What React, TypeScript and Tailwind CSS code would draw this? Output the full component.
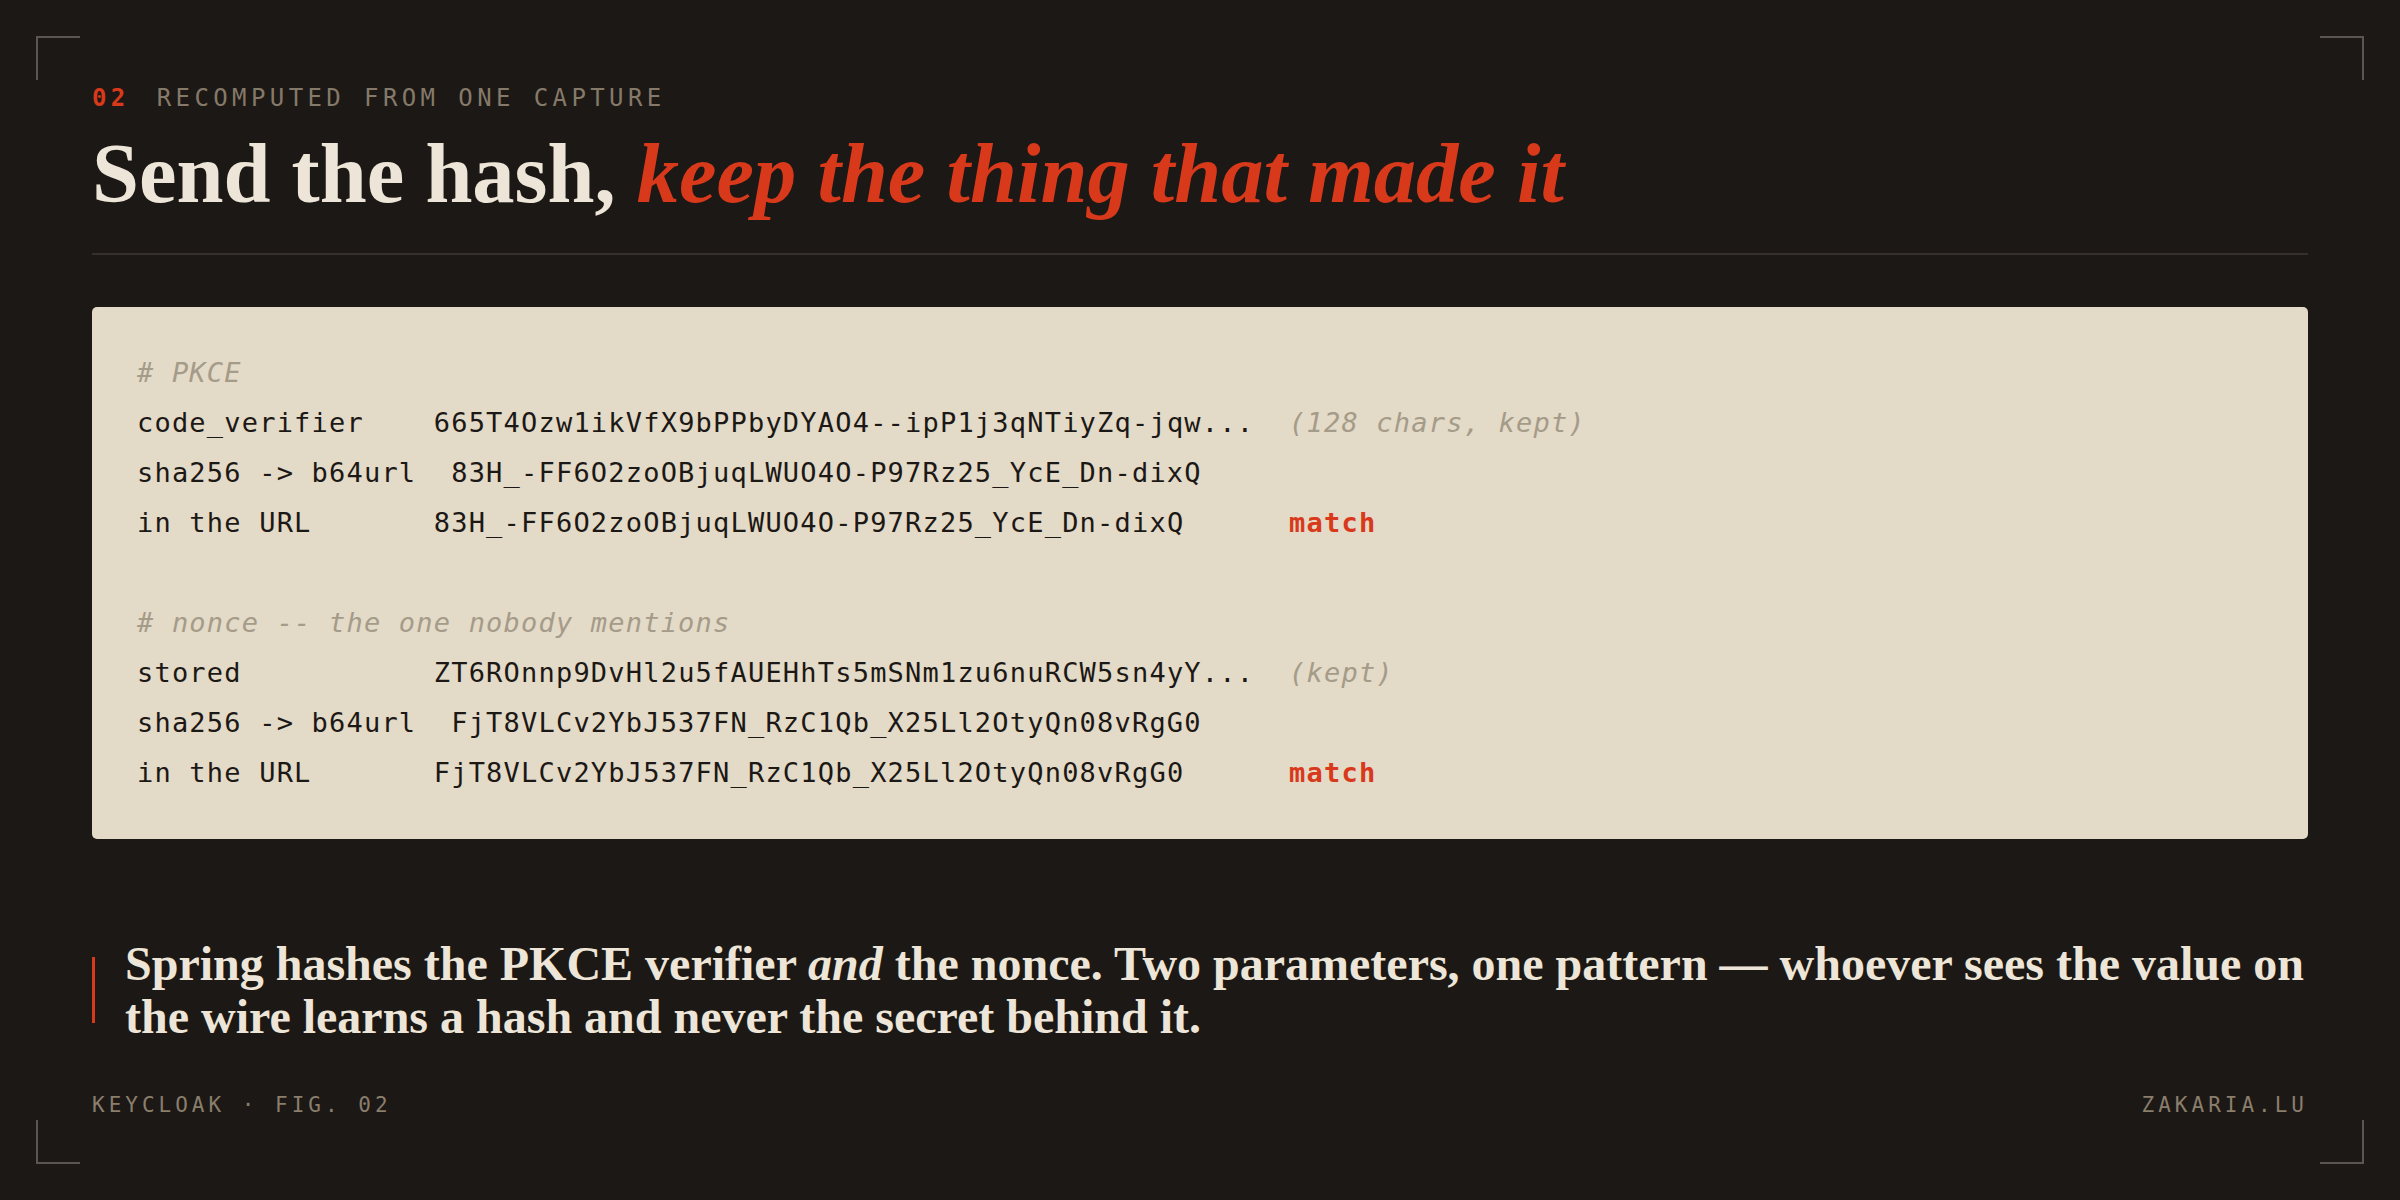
import React from "react";

const mono = "font-['DejaVu_Sans_Mono','Liberation_Mono',monospace]";
const serif = "font-['Liberation_Serif','DejaVu_Serif',serif]";

type Line = { label?: string; value?: string; note?: string; match?: boolean; comment?: string };

const lines: Line[] = [
  { comment: "# PKCE" },
  { label: "code_verifier    ", value: "665T4Ozw1ikVfX9bPPbyDYAO4--ipP1j3qNTiyZq-jqw...  ", note: "(128 chars, kept)" },
  { label: "sha256 -> b64url  ", value: "83H_-FF6O2zoOBjuqLWUO4O-P97Rz25_YcE_Dn-dixQ" },
  { label: "in the URL       ", value: "83H_-FF6O2zoOBjuqLWUO4O-P97Rz25_YcE_Dn-dixQ      ", match: true },
  {},
  { comment: "# nonce -- the one nobody mentions" },
  { label: "stored           ", value: "ZT6ROnnp9DvHl2u5fAUEHhTs5mSNm1zu6nuRCW5sn4yY...  ", note: "(kept)" },
  { label: "sha256 -> b64url  ", value: "FjT8VLCv2YbJ537FN_RzC1Qb_X25Ll2OtyQn08vRgG0" },
  { label: "in the URL       ", value: "FjT8VLCv2YbJ537FN_RzC1Qb_X25Ll2OtyQn08vRgG0      ", match: true },
];

function Corner({ pos }: { pos: "tl" | "tr" | "bl" | "br" }) {
  const cls =
    pos === "tl"
      ? "top-[36px] left-[36px] border-t-2 border-l-2"
      : pos === "tr"
      ? "top-[36px] right-[36px] border-t-2 border-r-2"
      : pos === "bl"
      ? "bottom-[36px] left-[36px] border-b-2 border-l-2"
      : "bottom-[36px] right-[36px] border-b-2 border-r-2";
  return <div className={`absolute w-[44px] h-[44px] border-[#5a554e] ${cls}`} />;
}

export default function App() {
  return (
    <div className="relative w-full h-screen overflow-hidden bg-[#1c1815] px-[92px] pt-[86px]">
      <Corner pos="tl" />
      <Corner pos="tr" />
      <Corner pos="bl" />
      <Corner pos="br" />

      {/* Eyebrow */}
      <div className={`${mono} flex items-center gap-[27px] text-[24px] leading-none tracking-[4.4px] uppercase`}>
        <span className="text-[#d9391b] font-bold">02</span>
        <span className="text-[#857a69]">Recomputed from one capture</span>
      </div>

      {/* Title */}
      <h1 className={`${serif} mt-[22px] text-[84.5px] leading-none font-bold text-[#ede5d7]`}>
        Send the hash, <em className="text-[#d9391b]">keep the thing that made it</em>
      </h1>

      <div className="mt-[36px] border-t-2 border-[#35302b]" />

      {/* Code block */}
      <div className={`${mono} mt-[52px] rounded-[5px] bg-[#e3dac7] pl-[45px] pr-[40px] pt-[41px] pb-[41px] text-[27px] leading-[50px] tracking-[1.2px] text-[#1c1815]`}>
        {lines.map((l, i) => (
          <div key={i} className="whitespace-pre h-[50px]">
            {l.comment && <span className="italic text-[#a59b89]">{l.comment}</span>}
            {l.label}
            {l.value}
            {l.note && <span className="italic text-[#a59b89]">{l.note}</span>}
            {l.match && <span className="font-bold text-[#d9391b]">match</span>}
          </div>
        ))}
      </div>

      {/* Pull quote */}
      <div className="mt-[98px] flex">
        <div className="w-[3px] my-[20px] bg-[#d9391b] shrink-0" />
        <p className={`${serif} ml-[30px] text-[48px] leading-[53px] font-bold text-[#ede5d7]`}>
          Spring hashes the PKCE verifier <em>and</em> the nonce. Two parameters, one pattern — whoever sees the value on
          <br />
          the wire learns a hash and never the secret behind it.
        </p>
      </div>

      {/* Footer */}
      <div className={`${mono} absolute left-[92px] right-[92px] bottom-[84px] flex justify-between text-[21px] leading-none tracking-[4px] text-[#8a7e6c]`}>
        <span>KEYCLOAK · FIG. 02</span>
        <span>ZAKARIA.LU</span>
      </div>
    </div>
  );
}
